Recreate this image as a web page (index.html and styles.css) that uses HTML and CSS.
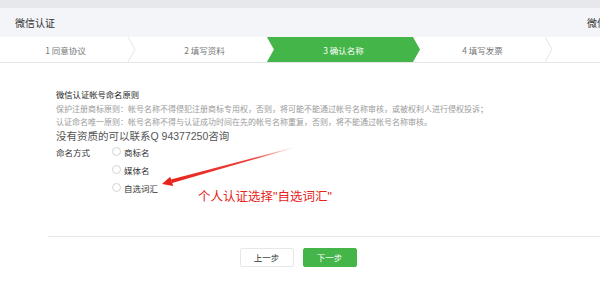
FILE: index.html
```html
<!DOCTYPE html>
<html>
<head>
    <title>微信认证</title>
    <link rel="stylesheet" href="styles.css">
</head>
<body>
    <div class="topbar"></div>
    <div class="header">
        <span>微信认证</span>
        <span>微信认证</span>
    </div>

    <div class="steps">
        <div class="step">1 同意协议<svg class="chev" viewBox="0 0 7 25"><polyline points="0,0 7,12.5 0,25"/></svg></div>
        <div class="step">2 填写资料<svg class="chev" viewBox="0 0 7 25"><polyline points="0,0 7,12.5 0,25"/></svg></div>
        <div class="step active">3 确认名称</div>
        <div class="step">4 填写发票<svg class="chev" viewBox="0 0 7 25"><polyline points="0,0 7,12.5 0,25"/></svg></div>
        <div class="step"></div>
    </div>

    <div class="content">
        <div class="rules">
            <div class="rules-title">微信认证帐号命名原则</div>
            <div class="rule">保护注册商标原则：帐号名称不得侵犯注册商标专用权，否则，将可能不能通过帐号名称审核，或被权利人进行侵权投诉；</div>
            <div class="rule">认证命名唯一原则：帐号名称不得与认证成功时间在先的帐号名称重复，否则，将不能通过帐号名称审核。</div>
            <div class="contact">没有资质的可以联系Q 94377250咨询</div>
        </div>

        <div class="naming">
            <div class="naming-label">命名方式</div>
            <div class="options">
                <label class="option"><span class="radio"></span>商标名</label>
                <label class="option"><span class="radio"></span>媒体名</label>
                <label class="option"><span class="radio"></span>自选词汇</label>
            </div>
        </div>
    </div>

    <div class="footer">
        <div class="buttons">
            <button class="btn">上一步</button>
            <button class="btn btn-primary">下一步</button>
        </div>
    </div>

    <!-- annotation drawn over the screenshot -->
    <svg class="arrow" viewBox="0 0 600 307">
        <defs>
            <linearGradient id="fade" x1="296" y1="147" x2="170" y2="182" gradientUnits="userSpaceOnUse">
                <stop offset="0" stop-color="#e8231b" stop-opacity="0"/>
                <stop offset="0.35" stop-color="#e8231b" stop-opacity="0.85"/>
                <stop offset="1" stop-color="#e8231b"/>
            </linearGradient>
        </defs>
        <polygon points="295.9,146.7 296.1,147.3 172.1,183 170.9,179.6" fill="url(#fade)"/>
        <polygon points="162,184 170.2,176.8 173.2,185.9" fill="#e8231b"/>
    </svg>
    <div class="note">个人认证选择"自选词汇"</div>
</body>
</html>
```

FILE: styles.css
```css
html, body {
    margin: 0;
    padding: 0;
}
body {
    font-family: "Noto Sans CJK SC", "Noto Sans", sans-serif;
    background-color: #fff;
    width: 600px;
    height: 307px;
    overflow: hidden;
    position: relative;
}
.topbar {
    height: 8px;
    background-color: #e7e8ec;
}
.header {
    width: 627px;
    height: 29px;
    box-sizing: border-box;
    padding-left: 15px;
    display: flex;
    justify-content: space-between;
    align-items: center;
    background-color: #f4f5f9;
    font-size: 10px;
    color: #333;
}
.steps {
    display: flex;
    margin-left: -4px;
    height: 25px;
    border-bottom: 1px solid #e7e7eb;
}
.step {
    position: relative;
    flex: 0 0 139px;
    display: flex;
    align-items: center;
    justify-content: center;
    font-size: 8.5px;
    color: #777;
}
.chev {
    position: absolute;
    right: 0;
    top: 0;
    width: 7px;
    height: 25px;
}
.chev polyline {
    fill: none;
    stroke: #e4e4e8;
    stroke-width: 1;
}
.step.active {
    color: #fff;
    z-index: 1;
}
.step.active::before {
    content: "";
    position: absolute;
    top: 0;
    bottom: 0;
    left: -7px;
    right: -7px;
    background-color: #44b549;
    clip-path: polygon(0 0, calc(100% - 7px) 0, 100% 50%, calc(100% - 7px) 100%, 0 100%, 7px 50%);
    z-index: -1;
}
.content {
    padding: 25px 0 0 56px;
}
.rules {
    font-size: 8px;
    line-height: 13.5px;
}
.rules-title {
    color: #222;
    font-size: 8.3px;
}
.rule {
    color: #9a9a9a;
}
.contact {
    font-family: "Liberation Sans", "Noto Sans CJK SC", sans-serif;
    font-size: 10.5px;
    line-height: 14px;
    color: #555;
}
.naming {
    display: flex;
    font-size: 8.5px;
    line-height: 18px;
    color: #333;
}
.naming-label {
    width: 56px;
}
.options {
    display: flex;
    flex-direction: column;
}
.option {
    display: flex;
    align-items: center;
}
.radio {
    width: 7px;
    height: 7px;
    border: 1px solid #d4d4d4;
    border-radius: 50%;
    margin-right: 3px;
}
.footer {
    margin: 39px 0 0 48px;
    border-top: 1px solid #e7e7eb;
    padding-top: 11px;
}
.buttons {
    display: flex;
    justify-content: center;
    gap: 9px;
    margin-left: -52px;
}
.btn {
    width: 54px;
    height: 19px;
    padding: 0;
    font-family: inherit;
    font-size: 8.5px;
    color: #333;
    background-color: #fff;
    border: 1px solid #e7e7eb;
    border-radius: 2px;
}
.btn-primary {
    color: #fff;
    background-color: #44b549;
    border-color: #44b549;
}
.arrow {
    position: absolute;
    left: 0;
    top: 0;
    width: 600px;
    height: 307px;
    pointer-events: none;
}
.note {
    position: absolute;
    left: 198px;
    top: 189px;
    font-family: "Liberation Sans", "Noto Sans CJK SC", sans-serif;
    font-size: 12.5px;
    line-height: 16px;
    color: #e8231b;
}
```
